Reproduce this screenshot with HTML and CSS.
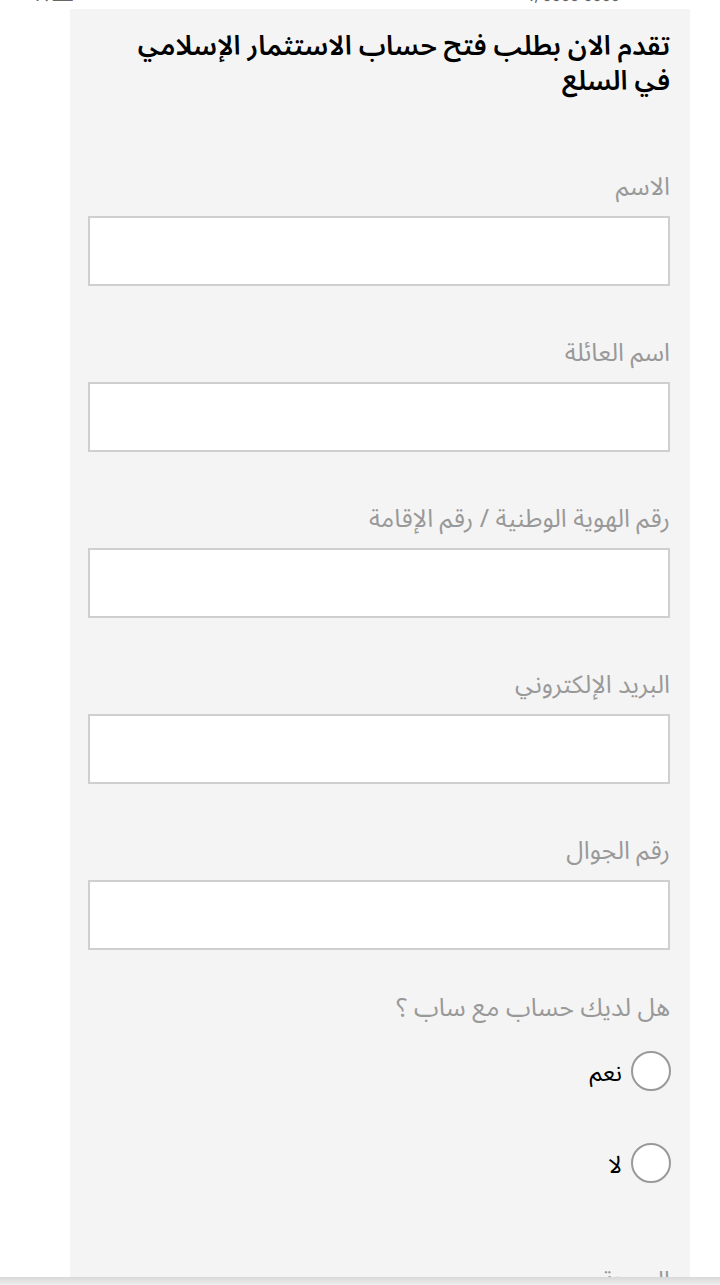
FILE: index.html
```html
<!DOCTYPE html>
<html lang="ar" dir="rtl">
<head>
<meta charset="utf-8">
<title>طلب فتح حساب</title>
<link rel="stylesheet" href="styles.css">
</head>
<body>
<div class="top-cut">
  <span class="cut-right">0000 0000 ,،</span>
  <span class="cut-left">ــــ . ،</span>
</div>
<main class="panel">
  <h1 class="title">تقدم الان بطلب فتح حساب الاستثمار الإسلامي في السلع</h1>
  <form class="form">
    <div class="field">
      <label class="label">الاسم</label>
      <input class="input" type="text">
    </div>
    <div class="field">
      <label class="label">اسم العائلة</label>
      <input class="input" type="text">
    </div>
    <div class="field">
      <label class="label">رقم الهوية الوطنية / رقم الإقامة</label>
      <input class="input" type="text">
    </div>
    <div class="field">
      <label class="label">البريد الإلكتروني</label>
      <input class="input" type="text">
    </div>
    <div class="field">
      <label class="label">رقم الجوال</label>
      <input class="input" type="text">
    </div>
    <div class="field radio-field">
      <div class="label">هل لديك حساب مع ساب ؟</div>
      <label class="radio"><span class="circle"></span><span class="radio-text">نعم</span></label>
      <label class="radio"><span class="circle"></span><span class="radio-text">لا</span></label>
    </div>
    <div class="field">
      <label class="label">المدينة</label>
      <input class="input" type="text">
    </div>
  </form>
</main>
<div class="bottom-bar"></div>
</body>
</html>
```
FILE: styles.css
```css
html, body {
  margin: 0;
  padding: 0;
  background: #ffffff;
}
body {
  font-family: "Noto Sans Arabic UI", "Noto Sans Arabic", "Noto Sans", "DejaVu Sans", sans-serif;
  direction: rtl;
}
.top-cut {
  height: 9px;
  overflow: hidden;
  display: flex;
  justify-content: space-between;
  padding: 0 100px 0 35px;
  font-size: 16px;
  line-height: 16px;
  color: #666;
}
.top-cut span {
  margin-top: -13px;
}
.panel {
  background: #f4f4f4;
  margin: 0 30px 0 70px;
  padding: 18px 20px 40px 18px;
  min-height: 1400px;
}
.title {
  margin: 0;
  padding-left: 28px;
  font-size: 27px;
  line-height: 35px;
  font-weight: 600;
  color: #000;
}
.form {
  display: flex;
  flex-direction: column;
  gap: 50px;
  margin-top: 73px;
}
.field {
  display: flex;
  flex-direction: column;
  align-items: stretch;
}
.label {
  font-size: 25px;
  line-height: 30px;
  color: #999;
  margin-bottom: 16px;
}
.input {
  height: 70px;
  box-sizing: border-box;
  border: 2px solid #cfcfcf;
  background: #fff;
  margin: 0;
  width: 100%;
}
.radio-field {
  margin-top: -9px;
}
.radio-field .label {
  margin-bottom: 29px;
}
.radio {
  display: flex;
  align-items: center;
  gap: 9px;
  height: 42px;
  margin-bottom: 50px;
}
.radio:last-child {
  margin-bottom: 30px;
}
.circle {
  width: 36px;
  height: 36px;
  border: 2px solid #999;
  border-radius: 50%;
  background: #fff;
  flex: none;
  margin-right: -1px;
}
.radio-text {
  font-size: 24px;
  color: #000;
}
.bottom-bar {
  position: fixed;
  left: 0;
  right: 0;
  bottom: 0;
  height: 8px;
  background: linear-gradient(#d8d8d8, #eeeeee);
}
```
